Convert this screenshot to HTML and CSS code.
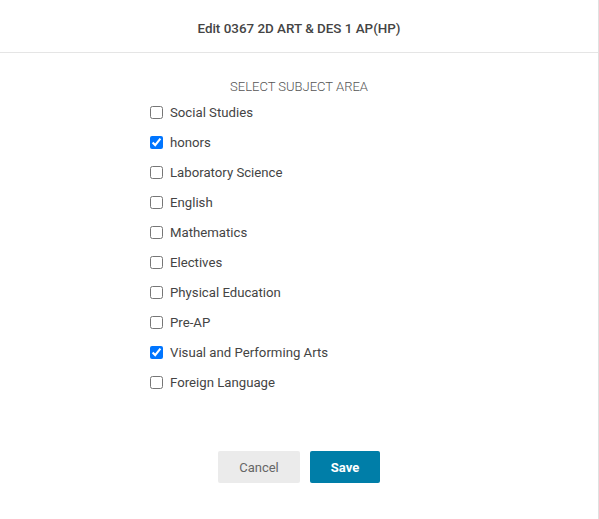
FILE: index.html
```html
<!DOCTYPE html>
<html>
<head>
<meta charset="utf-8">
<link rel="stylesheet" href="styles.css">
</head>
<body>
<div class="modal">
  <div class="header">Edit 0367 2D ART &amp; DES 1 AP(HP)</div>
  <div class="body">
    <div class="panel">
      <div class="section-title">SELECT SUBJECT AREA</div>
      <ul class="list">
        <li><label><input type="checkbox"> Social Studies</label></li>
        <li><label><input type="checkbox" checked> honors</label></li>
        <li><label><input type="checkbox"> Laboratory Science</label></li>
        <li><label><input type="checkbox"> English</label></li>
        <li><label><input type="checkbox"> Mathematics</label></li>
        <li><label><input type="checkbox"> Electives</label></li>
        <li><label><input type="checkbox"> Physical Education</label></li>
        <li><label><input type="checkbox"> Pre-AP</label></li>
        <li><label><input type="checkbox" checked> Visual and Performing Arts</label></li>
        <li><label><input type="checkbox"> Foreign Language</label></li>
      </ul>
    </div>
  </div>
  <div class="footer">
    <button class="btn btn-cancel">Cancel</button>
    <button class="btn btn-save">Save</button>
  </div>
</div>
</body>
</html>
```

FILE: styles.css
```css
html, body {
  margin: 0;
  padding: 0;
  background: #fff;
}
body {
  font-family: Roboto, "Liberation Sans", sans-serif;
  color: #444;
}
.modal {
  width: 598px;
  height: 519px;
  border-right: 1px solid #e0e0e0;
  display: flex;
  flex-direction: column;
}
.header {
  height: 53px;
  border-bottom: 1px solid #e5e5e5;
  display: flex;
  align-items: center;
  justify-content: center;
  font-size: 13.4px;
  font-weight: 500;
  color: #444;
  padding-top: 4px;
  box-sizing: border-box;
}
.body {
  display: flex;
  justify-content: center;
  padding-top: 26px;
}
.panel {
  width: 300px;
}
.section-title {
  text-align: center;
  font-size: 13px;
  font-weight: 300;
  color: #555;
  line-height: 16px;
  margin-bottom: 10px;
}
.list {
  list-style: none;
  margin: 0;
  padding: 0;
}
.list li {
  height: 30px;
}
.list label {
  display: flex;
  align-items: center;
  gap: 7px;
  font-size: 13.2px;
  line-height: 16px;
  color: #444;
}
.list input {
  margin: 0 0 1px 1px;
  width: 13px;
  height: 13px;
}
.footer {
  display: flex;
  justify-content: center;
  gap: 10px;
  margin-top: 46px;
}
.btn {
  height: 32px;
  border: none;
  border-radius: 2px;
  font-family: Roboto, "Liberation Sans", sans-serif;
  font-size: 13px;
  padding: 0;
}
.btn-cancel {
  width: 82px;
  background: #ebebeb;
  color: #666;
}
.btn-save {
  width: 70px;
  background: #007ea8;
  color: #fff;
  font-weight: 700;
}
```
